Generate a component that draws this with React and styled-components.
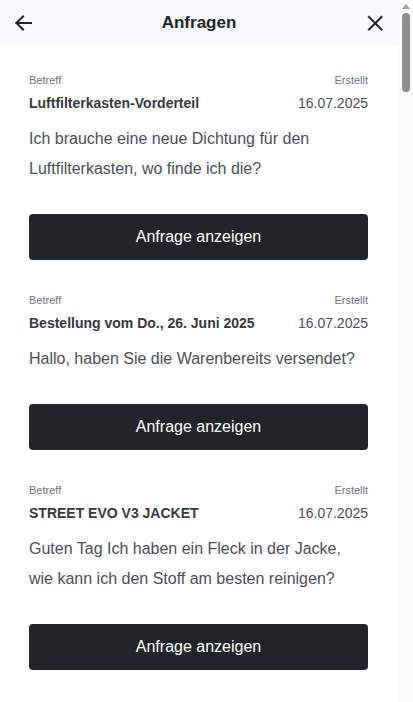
import React from 'react';
import styled, { createGlobalStyle } from 'styled-components';

const GlobalStyle = createGlobalStyle`
  html, body {
    margin: 0;
    padding: 0;
    height: 100%;
    overflow: hidden;
  }
  body {
    font-family: "Liberation Sans", Arial, sans-serif;
    background: #fff;
  }
  #root {
    height: 100%;
  }
`;

const Page = styled.div`
  height: 100vh;
  display: flex;
  overflow: hidden;
`;

const Content = styled.div`
  flex: 1;
  min-width: 0;
  background: #fff;
`;

const ScrollTrack = styled.div`
  width: 15px;
  flex-shrink: 0;
  background: #fafafa;
  display: flex;
  flex-direction: column;
  align-items: center;
  padding-top: 4px;
  gap: 4px;
`;

const ScrollArrow = styled.div`
  width: 0;
  height: 0;
  border-left: 4px solid transparent;
  border-right: 4px solid transparent;
  border-bottom: 5px solid #a3a3a3;
`;

const ScrollThumb = styled.div`
  width: 8px;
  height: 79px;
  border-radius: 4px;
  background: #8e8e8e;
`;

const Header = styled.header`
  height: 45px;
  background: #f8f9fa;
  display: flex;
  align-items: center;
  justify-content: space-between;
  padding: 0 12px 0 12px;
`;

const IconButton = styled.button`
  width: 22px;
  height: 22px;
  border: none;
  background: none;
  padding: 0;
  display: flex;
  align-items: center;
  justify-content: center;
  color: #212529;
`;

const Title = styled.h1`
  margin: 0;
  font-size: 17px;
  font-weight: 700;
  color: #212529;
`;

const List = styled.main`
  display: flex;
  flex-direction: column;
  gap: 32px;
  padding: 27px 30px 40px 29px;
`;

const Card = styled.section`
  display: flex;
  flex-direction: column;
`;

const Row = styled.div`
  display: flex;
  justify-content: space-between;
  align-items: baseline;
`;

const Label = styled.span`
  font-size: 11px;
  line-height: 16px;
  color: #6c757d;
`;

const Subject = styled.span`
  font-size: 14px;
  line-height: 21px;
  font-weight: 700;
  color: #343a40;
`;

const DateText = styled.span`
  font-size: 14px;
  line-height: 21px;
  color: #495057;
`;

const Meta = styled.div`
  display: flex;
  flex-direction: column;
  gap: 5px;
`;

const Message = styled.p`
  margin: 10px 0 30px;
  font-size: 16px;
  line-height: 30px;
  color: #495057;
`;

const ShowButton = styled.button`
  height: 46px;
  border: none;
  border-radius: 4px;
  background: #212529;
  color: #fff;
  font-family: "Liberation Sans", Arial, sans-serif;
  font-size: 16px;
`;

const items = [
  {
    subject: 'Luftfilterkasten-Vorderteil',
    date: '16.07.2025',
    text: 'Ich brauche eine neue Dichtung für den Luftfilterkasten, wo finde ich die?',
  },
  {
    subject: 'Bestellung vom Do., 26. Juni 2025',
    date: '16.07.2025',
    text: 'Hallo, haben Sie die Warenbereits versendet?',
  },
  {
    subject: 'STREET EVO V3 JACKET',
    date: '16.07.2025',
    text: 'Guten Tag Ich haben ein Fleck in der Jacke, wie kann ich den Stoff am besten reinigen?',
  },
];

const BackIcon = () => (
  <svg width="18" height="18" viewBox="0 0 18 18" fill="none" stroke="currentColor" strokeWidth="2" strokeLinecap="square">
    <path d="M2.5 9H17" />
    <path d="M9 2.5L2.5 9L9 15.5" />
  </svg>
);

const CloseIcon = () => (
  <svg width="16" height="16" viewBox="0 0 16 16" fill="none" stroke="currentColor" strokeWidth="2" strokeLinecap="square">
    <path d="M2 2L14.5 14.5" />
    <path d="M14.5 2L2 14.5" />
  </svg>
);

const App = () => (
  <>
    <GlobalStyle />
    <Page>
      <Content>
        <Header>
          <IconButton aria-label="Zurück"><BackIcon /></IconButton>
          <Title>Anfragen</Title>
          <IconButton aria-label="Schließen"><CloseIcon /></IconButton>
        </Header>
        <List>
          {items.map((item, i) => (
            <Card key={i}>
              <Meta>
                <Row>
                  <Label>Betreff</Label>
                  <Label>Erstellt</Label>
                </Row>
                <Row>
                  <Subject>{item.subject}</Subject>
                  <DateText>{item.date}</DateText>
                </Row>
              </Meta>
              <Message>{item.text}</Message>
              <ShowButton>Anfrage anzeigen</ShowButton>
            </Card>
          ))}
        </List>
      </Content>
      <ScrollTrack aria-hidden="true">
        <ScrollArrow />
        <ScrollThumb />
      </ScrollTrack>
    </Page>
  </>
);

export default App;
